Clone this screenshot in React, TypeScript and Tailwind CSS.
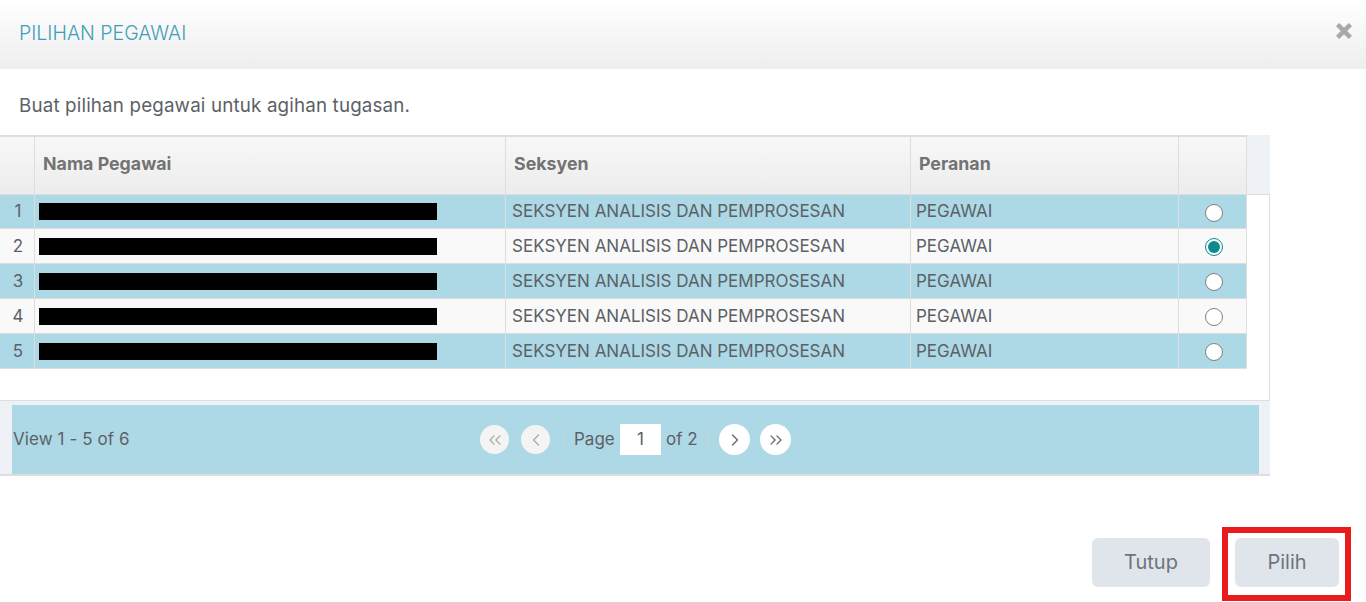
import { ChevronLeft, ChevronRight, ChevronsLeft, ChevronsRight } from "lucide-react";

const grid = "grid grid-cols-[35px_471px_405px_268px_68px]";
const rows = [false, true, false, false, false];
const rowH = ["h-[34px]", "h-[35px]", "h-[35px]", "h-[35px]", "h-[35px]"];

function Radio({ checked }: { checked: boolean }) {
  return checked ? (
    <span className="flex h-[18px] w-[18px] items-center justify-center rounded-full border border-[#0b8a8f] bg-white">
      <span className="h-[12px] w-[12px] rounded-full bg-[#0b8a8f]" />
    </span>
  ) : (
    <span className="h-[18px] w-[18px] rounded-full border border-[#808080] bg-white" />
  );
}

export default function App() {
  return (
    <div className="h-[602px] w-[1366px] overflow-hidden bg-white font-['Inter','Liberation_Sans',sans-serif] text-[#5c6166]">
      <header className="flex h-[69px] items-center justify-between bg-gradient-to-b from-white to-[#eeeeee] pl-[19px] pr-[14px]">
        <h1 className="-mt-[2px] text-[19.5px] font-light text-[#3f9db8]">PILIHAN PEGAWAI</h1>
        <svg width="16" height="16" viewBox="0 0 16 16" className="-mt-[8px]">
          <path d="M3.2 3.2L12.8 12.8M12.8 3.2L3.2 12.8" stroke="#a9a9a9" strokeWidth="4.6" strokeLinecap="square" />
        </svg>
      </header>

      <p className="h-[66px] pl-[19px] pt-[25px] text-[18.8px] leading-[24px] tracking-[0.15px]">Buat pilihan pegawai untuk agihan tugasan.</p>

      <div className="w-[1270px]">
        <div className="flex h-[60px]">
          <div className={`${grid} flex-none border-t-2 border-b border-[#dedede] bg-gradient-to-b from-[#f8f8f8] to-[#ececec] pb-[2px] text-[17.8px] font-bold text-[#737373]`}>
            <div className="-mb-[2px] border-r border-[#dedede]" />
            <div className="-mb-[2px] flex items-center border-r border-[#dedede] pb-[2px] pl-2">Nama Pegawai</div>
            <div className="-mb-[2px] flex items-center border-r border-[#dedede] pb-[2px] pl-2">Seksyen</div>
            <div className="-mb-[2px] flex items-center border-r border-[#dedede] pb-[2px] pl-2">Peranan</div>
            <div className="-mb-[2px] border-r border-[#dedede]" />
          </div>
          <div className="flex-1 border-b border-[#dedede] bg-[#eef2f7]" />
        </div>

        <div className="h-[205px] border-r border-[#dedede]">
          {rows.map((checked, i) => (
            <div
              key={i}
              className={`${grid} ${rowH[i]} w-[1247px] items-stretch border-b border-[#dedede] text-[17px] ${i % 2 === 0 ? "bg-[#add8e6]" : "bg-[#f9f9f9]"}`}
            >
              <div className="flex items-center justify-center border-r border-[#dedede] pl-[2px] pt-[1px]">{i + 1}</div>
              <div className="flex items-center border-r border-[#dedede] pl-1">
                <div className="h-[17px] w-[398px] bg-black" />
              </div>
              <div className="flex items-center border-r border-[#dedede] pl-[6px] pt-[1px]">SEKSYEN ANALISIS DAN PEMPROSESAN</div>
              <div className="flex items-center border-r border-[#dedede] pl-[5px] pt-[1px]">PEGAWAI</div>
              <div className="flex items-center justify-center border-r border-[#dedede] pl-[2px] pt-[2px]">
                <Radio checked={checked} />
              </div>
            </div>
          ))}
        </div>

        <div className="h-[76px] border-t border-b-2 border-[#dedede] bg-[#eef2f7] pl-3 pr-[11px] pt-1">
          <div className="flex h-[69px] items-center bg-[#add8e6] pl-[1px] text-[17px]">
            <span className="w-[467px] tracking-[0.08px]">View 1 - 5 of 6</span>
            <div className="flex items-center">
              <span className="flex h-[29px] w-[29px] items-center justify-center rounded-full bg-[#f4f4f4] text-[#a9a9a9]"><ChevronsLeft size={20} strokeWidth={1.5} /></span>
              <span className="ml-3 flex h-[29px] w-[29px] items-center justify-center rounded-full bg-[#f4f4f4] text-[#a9a9a9]"><ChevronLeft size={20} strokeWidth={1.5} /></span>
              <span className="ml-[13px] h-[25px] w-[2px] bg-[#bcd6e0]" />
              <span className="ml-[9px] w-[46px]">Page</span>
              <span className="flex h-[31px] w-[41px] items-center justify-center bg-white">1</span>
              <span className="ml-[5px] w-[40px]">of 2</span>
              <span className="h-[25px] w-[2px] bg-[#bcd6e0]" />
              <span className="ml-[11px] flex h-[31px] w-[31px] items-center justify-center rounded-full bg-white text-[#666666]"><ChevronRight size={20} strokeWidth={1.5} /></span>
              <span className="ml-[10px] flex h-[31px] w-[31px] items-center justify-center rounded-full bg-white text-[#666666]"><ChevronsRight size={20} strokeWidth={1.5} /></span>
            </div>
          </div>
        </div>
      </div>

      <footer className="mt-[51px] flex items-start justify-end pr-[15px]">
        <button className="mr-3 mt-[11px] h-[49px] w-[118px] rounded-md bg-[#e0e5ec] pb-[2px] text-[20px] text-[#6c757d]">Tutup</button>
        <div className="border-[6px] border-[#e81c1c] pb-2 pl-[7px] pr-[6px] pt-[5px]">
          <button className="block h-[49px] w-[104px] rounded-md bg-[#e0e5ec] pb-[2px] text-[20px] text-[#6c757d]">Pilih</button>
        </div>
      </footer>
    </div>
  );
}
